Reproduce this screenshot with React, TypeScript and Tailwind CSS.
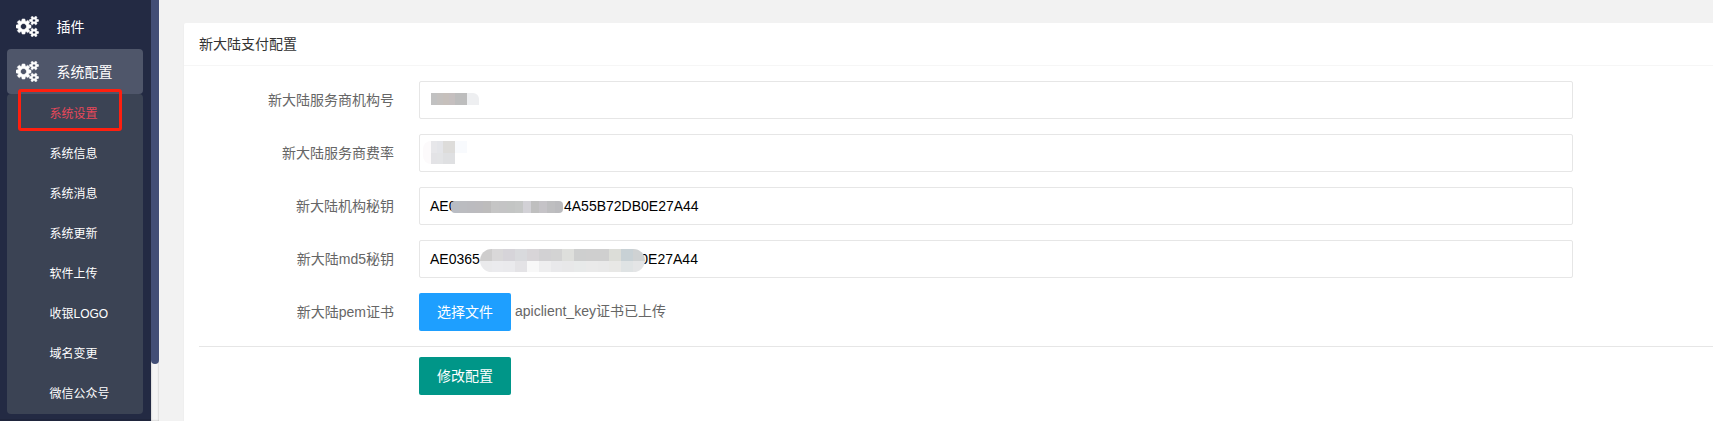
import type { ReactNode } from "react";

const GEARS =
  "M896 896q0-106-75-181t-181-75-181 75-75 181 75 181 181 75 181-75 75-181zm768 512q0-52-38-90t-90-38-90 38-38 90q0 53 37.5 90.5t90.5 37.5 90.5-37.5 37.5-90.5zm0-1024q0-52-38-90t-90-38-90 38-38 90q0 53 37.5 90.5t90.5 37.5 90.5-37.5 37.5-90.5zm-384 421v185q0 10-7 19.5t-16 10.5l-155 24q-11 35-32 76 34 48 90 115 7 11 7 20 0 12-7 19-23 30-82.5 89.5t-78.5 59.5q-11 0-21-7l-115-90q-37 19-77 31-11 108-23 155-7 24-30 24h-186q-11 0-20-7.5t-10-17.5l-23-153q-34-10-75-31l-118 89q-7 7-20 7-11 0-21-8-144-133-144-160 0-9 7-19 10-14 41-53t47-61q-23-44-35-82l-152-24q-10-1-17-9.5t-7-19.5v-185q0-10 7-19.5t16-10.5l155-24q11-35 32-76-34-48-90-115-7-11-7-20 0-12 7-20 22-30 82-89t79-59q11 0 21 7l115 90q34-18 77-32 11-108 23-154 7-24 30-24h186q11 0 20 7.5t10 17.5l23 153q34 10 75 31l118-89q8-7 20-7 11 0 21 8 144 133 144 160 0 8-7 19-12 16-42 54t-45 60q23 48 34 82l152 23q10 2 17 10.5t7 19.5zm640 533v140q0 16-149 31-12 27-30 52 51 113 51 138 0 4-4 7-122 71-124 71-8 0-46-47t-52-68q-20 2-30 2t-30-2q-14 21-52 68t-46 47q-2 0-124-71-4-3-4-7 0-25 51-138-18-25-30-52-149-15-149-31v-140q0-16 149-31 13-29 30-52-51-113-51-138 0-4 4-7 4-2 35-20t59-34 30-16q8 0 46 46.5t52 67.5q20-2 30-2t30 2q51-71 92-112l6-2q4 0 124 70 4 3 4 7 0 25-51 138 17 23 30 52 149 15 149 31zm0-1024v140q0 16-149 31-12 27-30 52 51 113 51 138 0 4-4 7-122 71-124 71-8 0-46-47t-52-68q-20 2-30 2t-30-2q-14 21-52 68t-46 47q-2 0-124-71-4-3-4-7 0-25 51-138-18-25-30-52-149-15-149-31v-140q0-16 149-31 13-29 30-52-51-113-51-138 0-4 4-7 4-2 35-20t59-34 30-16q8 0 46 46.5t52 67.5q20-2 30-2t30 2q51-71 92-112l6-2q4 0 124 70 4 3 4 7 0 25-51 138 17 23 30 52 149 15 149 31z";

function GearsIcon() {
  return (
    <svg viewBox="0 0 1920 1792" className="mb-px h-[21px] w-[22.5px] shrink-0 fill-white stroke-white">
      <path d={GEARS} strokeWidth={50} />
    </svg>
  );
}

function MenuHead({ label, active = false }: { label: string; active?: boolean }) {
  return (
    <div
      className={
        active
          ? "flex h-[45px] items-center gap-[18px] rounded-[4px] bg-[#4f566a] pl-[9px]"
          : "flex h-[45px] items-center gap-[18px] rounded-[4px] pl-[9px]"
      }
    >
      <GearsIcon />
      <span className="text-sm text-white">{label}</span>
    </div>
  );
}

const subItems = ["系统设置", "系统信息", "系统消息", "系统更新", "软件上传", "收银LOGO", "域名变更", "微信公众号"];

function Sidebar() {
  return (
    <aside className="h-full w-[151px] shrink-0 overflow-hidden bg-[#232a43] pr-2 pl-[7px] pt-1">
      <MenuHead label="插件" />
      <MenuHead label="系统配置" active />
      <ul className="rounded-[4px] bg-[#3b4354]">
        {subItems.map((item, i) => (
          <li
            key={item}
            className={
              i === 0
                ? "relative flex h-10 items-center pl-[42.5px] text-xs text-[#e8485a]"
                : "flex h-10 items-center pl-[42.5px] text-xs text-white"
            }
          >
            {item}
            {i === 0 && (
              <span className="absolute -top-[5px] left-[11px] h-[42px] w-[104px] rounded-[3px] border-3 border-[#ff1f0f]" />
            )}
          </li>
        ))}
      </ul>
      <div className="mt-[5px] -mr-2 -ml-[7px] h-1 bg-[#1f253c]" />
    </aside>
  );
}

function Cells({ colors, height }: { colors: string[]; height: number }) {
  return (
    <div className="flex" style={{ height }}>
      {colors.map((c, i) => (
        <span key={i} className="flex-1" style={{ backgroundColor: c }} />
      ))}
    </div>
  );
}

function Row({ label, children }: { label: string; children: ReactNode }) {
  return (
    <div className="mb-[15px] flex h-[38px]">
      <label className="flex w-[210px] shrink-0 items-center justify-end pr-[15px] text-sm text-[#666]">{label}</label>
      <div className="ml-[10px] flex">{children}</div>
    </div>
  );
}

function Field({ children }: { children: ReactNode }) {
  return (
    <div className="flex h-[38px] w-[1154px] items-center rounded-[2px] border border-[#e6e6e6] bg-white pl-[10px] text-sm text-black">
      {children}
    </div>
  );
}

export default function App() {
  return (
    <div className="flex h-[421px] w-full overflow-hidden bg-[#f2f2f2] font-['Liberation_Sans','Noto_Sans_CJK_SC',sans-serif]">
      <Sidebar />
      <div className="h-full w-2 shrink-0 bg-[#f5f5f5] shadow-[inset_0_0_2px_rgba(0,0,0,0.3)]">
        <div className="h-[364px] rounded-b-[4px] bg-[#424e76]" />
      </div>
      <main className="min-w-0 flex-1 pt-[23px] pl-[25px]">
        <section className="h-full rounded-tl-[2px] bg-white shadow-[0_1px_2px_rgba(0,0,0,0.05)]">
          <h1 className="flex h-[43px] items-center border-b border-[#f6f6f6] pl-[15px] text-sm text-[#333]">
            新大陆支付配置
          </h1>
          <div className="pt-[15px] pl-[15px]">
            <Row label="新大陆服务商机构号">
              <Field>
                <div className="-mt-[2px] ml-px w-12 overflow-hidden rounded-tr-[6px]">
                  <Cells
                    height={12}
                    colors={["#c1c1c1", "#c4c1bf", "#c6c0bc", "#c5bfbf", "#bdbdbd", "#bdbdbd", "#eeeff1", "#eeeff1"]}
                  />
                </div>
              </Field>
            </Row>
            <Row label="新大陆服务商费率">
              <Field>
                <div className="-mt-[2px] -ml-[7px] flex h-[23px]">
                  <div className="h-[23px] w-2 rounded-l-full bg-[#fcfafb]" />
                  <div className="w-6">
                    <Cells height={12} colors={["#e7e7ea", "#e4e5e9", "#dddcda", "#dddcda"]} />
                    <Cells height={11} colors={["#e3e3e6", "#e3e4e6", "#dfe0e2", "#dfe0e2"]} />
                  </div>
                  <div className="h-3 w-3 bg-[#f8fafd]" />
                </div>
              </Field>
            </Row>
            <Row label="新大陆机构秘钥">
              <Field>
                <span>AE0</span>
                <div className="z-10 mt-[2px] -ml-[5.5px] w-28 overflow-hidden rounded-[4px]">
                  <Cells
                    height={12}
                    colors={["#b9bcc3", "#bbbcc0", "#bbbbbf", "#bcbbbe", "#bdbcbc", "#c5c5c5", "#c4c4c5", "#c3c5c4", "#c5c7c6", "#d2d1d6", "#bfbfbf", "#c5c3c7", "#bebec0", "#bbbbbe"]}
                  />
                </div>
                <span className="ml-px">4A55B72DB0E27A44</span>
              </Field>
            </Row>
            <Row label="新大陆md5秘钥">
              <Field>
                <span>AE0365</span>
                <div className="z-10 mt-[2px] w-[165px] overflow-hidden rounded-full">
                  <Cells
                    height={12}
                    colors={["#cecdcd", "#d9d8d9", "#d6d4d9", "#d9dadd", "#d8d5d8", "#d2d1d3", "#d3d3d3", "#dedfdc", "#cecfcf", "#cfcfcf", "#cfcfcf", "#dcddd8", "#c8d1d5", "#cfd2d3"]}
                  />
                  <Cells
                    height={11}
                    colors={["#eaeaec", "#ebebee", "#eaeaed", "#e4e3e6", "#f8f8f8", "#eeeeef", "#e9e9eb", "#e8e8e9", "#e8eaea", "#eaeaea", "#e9e9e9", "#e8e8e6", "#dfe3e4", "#e4e5e6"]}
                  />
                </div>
                <span className="-ml-[4.5px]">0E27A44</span>
              </Field>
            </Row>
            <Row label="新大陆pem证书">
              <button className="h-[38px] w-[92px] rounded-[2px] bg-[#1e9fff] text-sm text-white">选择文件</button>
              <span className="ml-1 pt-[8px] text-sm text-[#666]">apiclient_key证书已上传</span>
            </Row>
            <hr className="mb-[10px] border-[#e6e6e6]" />
            <button className="ml-[220px] h-[38px] w-[92px] rounded-[2px] bg-[#009688] text-sm text-white">
              修改配置
            </button>
          </div>
        </section>
      </main>
    </div>
  );
}
